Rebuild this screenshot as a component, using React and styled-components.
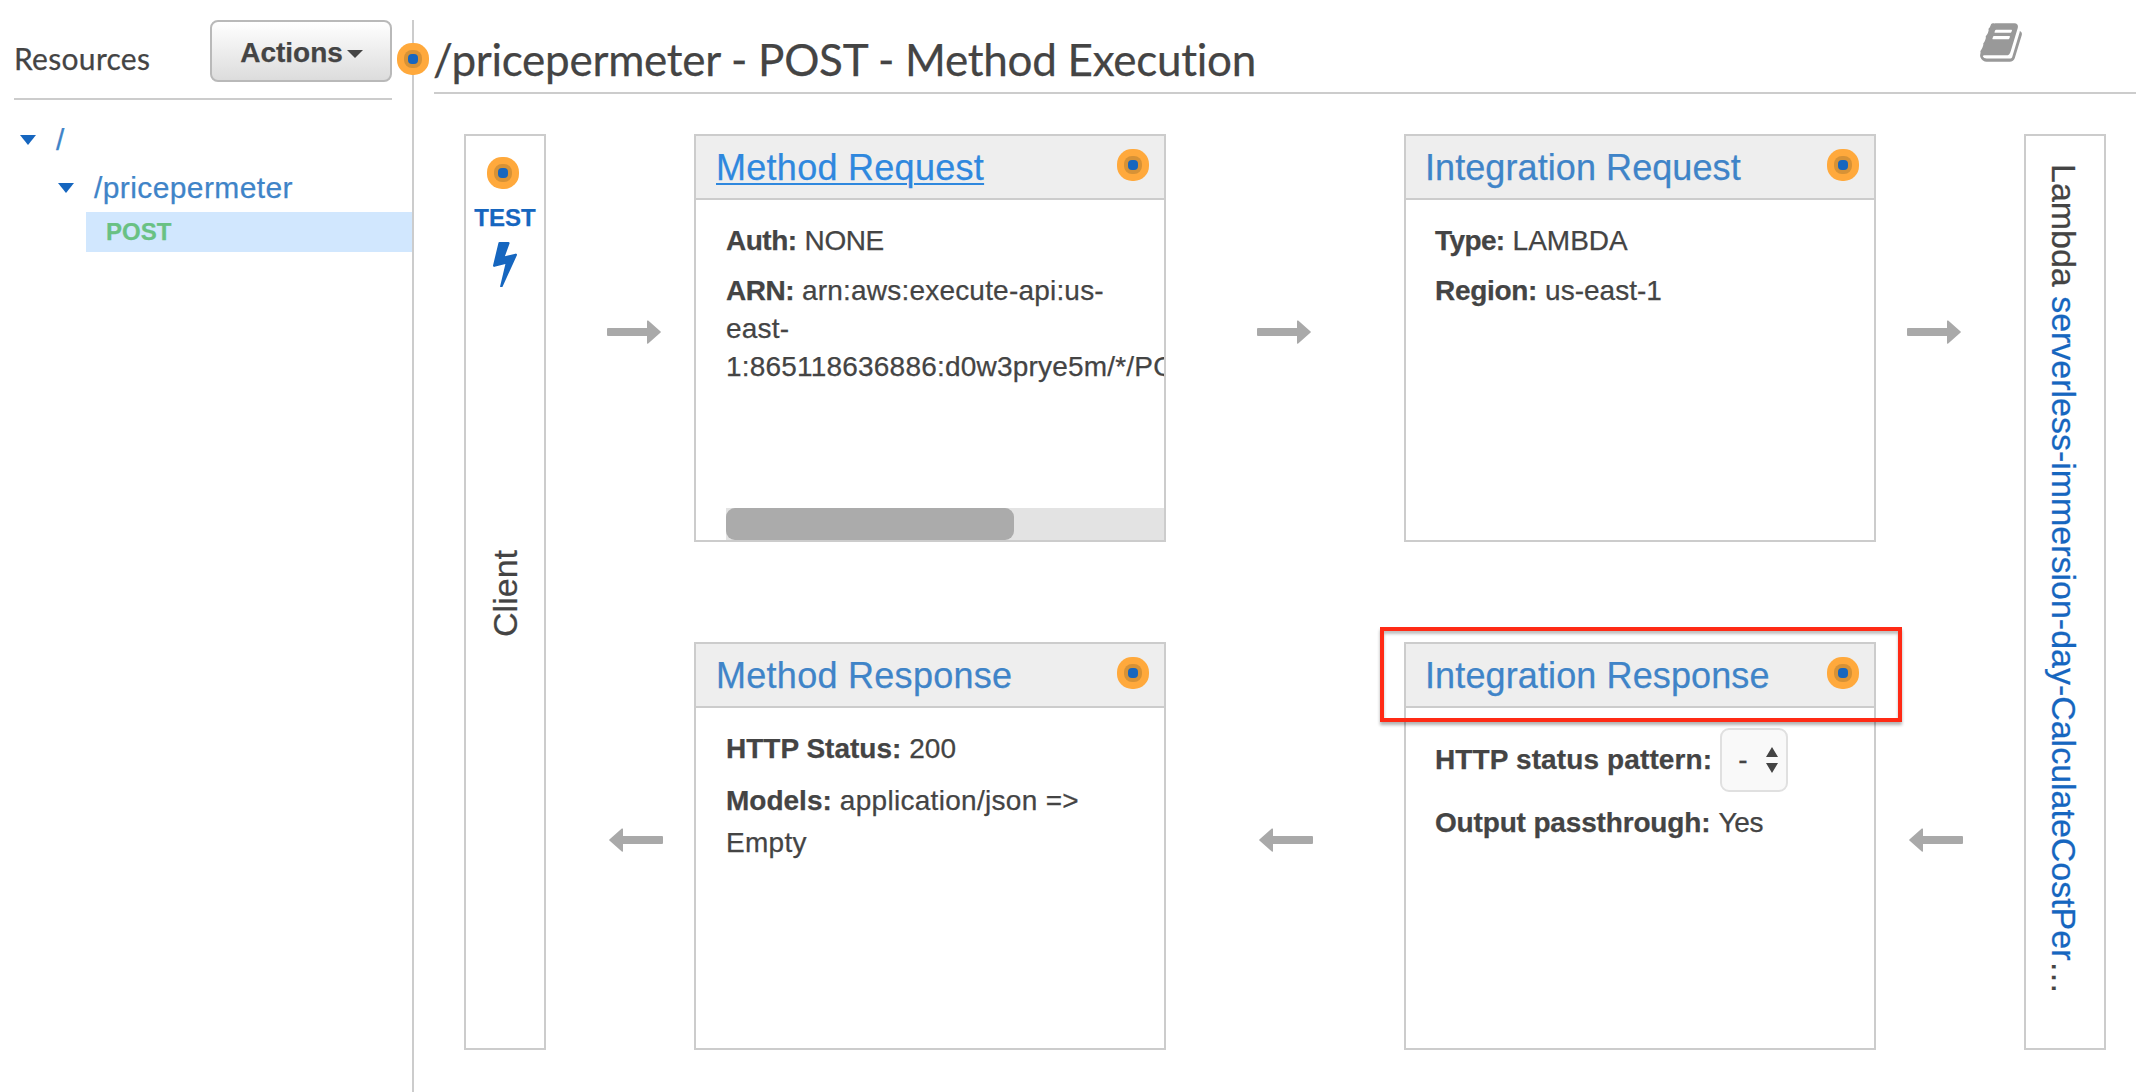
import React from "react";
import styled, { createGlobalStyle } from "styled-components";

const GlobalStyle = createGlobalStyle`
  * { box-sizing: border-box; }
  body {
    margin: 0;
    background: #fff;
    color: #444;
    font-family: "Liberation Sans", Arial, sans-serif;
    font-size: 28px;
    -webkit-text-stroke: 0.25px currentColor;
    overflow: hidden;
  }
`;

const Page = styled.div`
  display: flex;
  height: 1092px;
  padding-top: 20px;
`;

const Sidebar = styled.aside`
  width: 414px;
  flex: none;
  border-right: 2px solid #ccc;
`;

const SidebarHeader = styled.div`
  display: flex;
  justify-content: space-between;
  height: 80px;
  margin: 0 20px 0 14px;
  border-bottom: 2px solid #ccc;
`;

const SidebarTitle = styled.h2`
  margin: 19px 0 0;
  font: 400 30px/38px Lato, sans-serif;
  letter-spacing: 0.3px;
`;

const ActionsButton = styled.button`
  display: flex;
  align-items: center;
  justify-content: center;
  gap: 4px;
  width: 182px;
  height: 62px;
  padding: 3px 0 0 1px;
  border: 2px solid #b9b9b9;
  border-radius: 8px;
  background: linear-gradient(#fff, #dcdcdc);
  color: #444;
  font: bold 28px "Liberation Sans", Arial, sans-serif;
  letter-spacing: 0;
`;

const Caret = styled.span`
  flex: none;
  margin-top: ${(p) => p.$drop || 0}px;
  border: solid transparent;
  border-width: ${(p) => p.$h}px ${(p) => p.$w / 2}px 0;
  border-top-color: ${(p) => p.$color};
`;

const Tree = styled.nav`
  padding-top: 16px;
`;

const TreeRow = styled.div`
  display: flex;
  align-items: center;
  height: 48px;
  padding-left: ${(p) => p.$indent}px;
  gap: 20px;
  color: #3f84c8;
  font-size: 30px;
  letter-spacing: 0.4px;
`;

const MethodRow = styled.div`
  height: 40px;
  margin-left: 86px;
  padding-left: 20px;
  background: #d1e7fe;
  color: #69c183;
  font: bold 24px/40px "Liberation Sans", Arial, sans-serif;
`;

const Main = styled.main`
  position: relative;
  flex: 1;
  padding-left: 20px;
`;

const DividerMarker = styled.div`
  position: absolute;
  left: -17px;
  top: 23px;
`;

const MainHeader = styled.header`
  display: flex;
  justify-content: space-between;
  height: 74px;
  margin-right: 2px;
  padding-right: 114px;
  border-bottom: 2px solid #ccc;
`;

const Title = styled.h1`
  margin: 12px 0 0 -1px;
  font: 400 44px/54px Lato, sans-serif;
  letter-spacing: -0.28px;
  white-space: nowrap;
`;

const Flow = styled.div`
  display: grid;
  grid-template-columns: 82px 148px 472px 238px 472px 148px 82px;
  grid-template-rows: 408px 408px;
  row-gap: 100px;
  margin: 40px 0 0 30px;
`;

const EndColumn = styled.div`
  grid-row: 1 / 3;
  grid-column: ${(p) => p.$col};
  display: flex;
  flex-direction: column;
  align-items: center;
  border: 2px solid #ccc;
  font-size: 34px;
  line-height: 40px;
  white-space: nowrap;
`;

const ClientMarker = styled.div`
  margin: 21px 4px 0 0;
`;

const TestLink = styled.div`
  margin: 15px 0 10px;
  color: #1666bf;
  font: bold 24px/28px "Liberation Sans", Arial, sans-serif;
`;

const ClientLabel = styled.div`
  margin-top: 263px;
  writing-mode: vertical-rl;
  transform: rotate(180deg);
`;

const LambdaLabel = styled.div`
  margin: 28px 2px 0 0;
  writing-mode: vertical-rl;
  letter-spacing: -0.02px;
`;

const LambdaName = styled.span`
  color: #1666bf;
`;

const ArrowCell = styled.div`
  grid-row: ${(p) => p.$row};
  grid-column: ${(p) => p.$col};
  padding: 186px 0 0 ${(p) => p.$start}px;
  line-height: 0;
`;

const Card = styled.section`
  grid-row: ${(p) => p.$row};
  grid-column: ${(p) => p.$col};
  position: relative;
  display: flex;
  flex-direction: column;
  min-width: 0;
  border: 2px solid #ccc;
`;

const CardHeader = styled.div`
  display: flex;
  justify-content: space-between;
  align-items: center;
  flex: none;
  height: 64px;
  padding: 0 15px 0 ${(p) => p.$inset}px;
  border-bottom: 2px solid #ccc;
  background: #eee;
`;

const CardLink = styled.a`
  padding-top: 2px;
  color: ${(p) => (p.$active ? "#2f88de" : "#3f84c8")};
  font-size: 36px;
  line-height: 62px;
  letter-spacing: ${(p) => p.$spacing}px;
  text-decoration: ${(p) => (p.$active ? "underline" : "none")};
  text-decoration-thickness: 2px;
  text-underline-offset: 3px;
`;

const HeaderMarker = styled.div`
  padding-bottom: 4px;
`;

const CardBody = styled.div`
  flex: 1;
  display: flex;
  flex-direction: column;
  min-height: 0;
  padding: ${(p) => p.$top || 22}px 0 0 ${(p) => p.$inset || 30}px;
  overflow: hidden;
`;

const Field = styled.div`
  display: flex;
  align-items: center;
  gap: 8px;
  white-space: nowrap;
  line-height: ${(p) => p.$line || 38}px;
  margin-bottom: ${(p) => p.$gap ?? 12}px;
`;

const Label = styled.b`
  letter-spacing: ${(p) => p.$spacing || 0}px;
`;

const Value = styled.span`
  letter-spacing: ${(p) => p.$spacing || 0}px;
`;

const Scrollbar = styled.div`
  flex: none;
  height: 32px;
  margin-top: auto;
  background: #e3e3e3;
`;

const Thumb = styled.div`
  width: 288px;
  height: 32px;
  border-radius: 9px;
  background: #ababab;
`;

const Select = styled.div`
  display: flex;
  align-items: center;
  justify-content: space-between;
  width: 68px;
  height: 64px;
  padding: 0 8px 0 16px;
  border: 2px solid #e0e0e0;
  border-radius: 9px;
  background: #f9f9f9;
`;

const Highlight = styled.div`
  position: absolute;
  left: -26px;
  top: -17px;
  width: 522px;
  height: 95px;
  border: 4px solid #ff2a15;
  box-shadow: 0 3px 3px rgba(0, 0, 0, 0.3), inset 0 3px 3px rgba(0, 0, 0, 0.25);
`;

const Ring = styled.span`
  display: flex;
  align-items: center;
  justify-content: center;
  width: 32px;
  height: 32px;
  border-radius: 15px;
  background: #ffa93c;
`;

const RingMiddle = styled.span`
  display: flex;
  align-items: center;
  justify-content: center;
  width: 18px;
  height: 18px;
  border-radius: 8px;
  background: #d79236;
`;

const RingCore = styled.span`
  width: 10px;
  height: 10px;
  border-radius: 4px;
  background: #1666bf;
`;

const Marker = () => (
  <Ring>
    <RingMiddle>
      <RingCore />
    </RingMiddle>
  </Ring>
);

const Arrow = ({ left }) => (
  <svg width="54" height="24" viewBox="0 0 54 24" fill="#a9a9a9">
    <path
      transform={left ? "translate(54 0) scale(-1 1)" : undefined}
      d="M1 8H40V1Q40 0 41.2 .6L53.6 11.4Q54.2 12 53.6 12.6L41.2 23.4Q40 24 40 23V16H1Q0 16 0 15V9Q0 8 1 8Z"
    />
  </svg>
);

const Bolt = () => (
  <svg width="24" height="45" viewBox="0 128 896 1640" preserveAspectRatio="none" fill="#1666bf">
    <path d="M885 566q18 20 7 44l-540 1157q-13 25-42 25-4 0-14-2-17-5-25.5-19t-4.5-30l197-808-406 101q-4 1-12 1-18 0-31-11-18-15-13-39l201-825q4-14 16-23t28-9h328q19 0 32 12.5t13 29.5q0 8-5 18l-171 463 396-98q8-2 12-2 19 0 34 15z" />
  </svg>
);

const Book = () => (
  <svg width="42" height="45" viewBox="0 0 1664 1792" fill="#999">
    <path d="M1639 478q40 57 18 129l-275 906q-19 64-76.5 107.5t-122.5 43.5h-923q-77 0-148.5-53.5t-99.5-131.5q-24-67-2-127 0-4 3-27t4-37q1-8-3-21.5t-3-19.5q2-11 8-21t16.5-23.5 16.5-23.5q23-38 45-91.5t30-91.5q3-10 .5-30t-.5-28q3-11 17-28t17-23q21-36 42-92t25-90q1-9-2.5-32t.5-28q4-13 22-30.5t22-22.5q19-26 42.5-84.5t27.5-96.5q1-8-3-25.5t-2-26.5q2-8 9-18t18-23 17-21q8-12 16.5-30.5t15-35 16-36 19.5-32 26.5-23.5 36-11.5 47.5 5.5l-1 3q38-9 51-9h761q74 0 114 56t18 130l-274 906q-36 119-71.5 153.5t-128.5 34.5h-869q-27 0-38 15-11 16-1 43 24 70 144 70h923q29 0 56-15.5t35-41.5l300-987q7-22 5-57 38 15 59 43zm-1064 2q-4 13 2 22.5t20 9.5h608q13 0 25.5-9.5t16.5-22.5l21-64q4-13-2-22.5t-20-9.5h-608q-13 0-25.5 9.5t-16.5 22.5zm-83 256q-4 13 2 22.5t20 9.5h608q13 0 25.5-9.5t16.5-22.5l21-64q4-13-2-22.5t-20-9.5h-608q-13 0-25.5 9.5t-16.5 22.5z" />
  </svg>
);

const Stepper = () => (
  <svg width="12" height="26" viewBox="0 0 12 26" fill="#444">
    <path d="M6 0L12 10H0ZM0 16H12L6 26Z" />
  </svg>
);

const Header = ({ title, active, inset = 20, spacing = 0.28 }) => (
  <CardHeader $inset={inset}>
    <CardLink $active={active} $spacing={spacing}>
      {title}
    </CardLink>
    <HeaderMarker>
      <Marker />
    </HeaderMarker>
  </CardHeader>
);

const ARROWS = [
  { row: 1, col: 2, start: 61 },
  { row: 1, col: 4, start: 91 },
  { row: 1, col: 6, start: 31 },
  { row: 2, col: 2, start: 63, left: true },
  { row: 2, col: 4, start: 93, left: true },
  { row: 2, col: 6, start: 33, left: true },
];

export default function App() {
  return (
    <Page>
      <GlobalStyle />
      <Sidebar>
        <SidebarHeader>
          <SidebarTitle>Resources</SidebarTitle>
          <ActionsButton>
            Actions
            <Caret $w={16} $h={8} $drop={3} $color="#444" />
          </ActionsButton>
        </SidebarHeader>
        <Tree>
          <TreeRow $indent={20}>
            <Caret $w={17} $h={10} $color="#1666bf" />/
          </TreeRow>
          <TreeRow $indent={58}>
            <Caret $w={17} $h={10} $color="#1666bf" />
            /pricepermeter
          </TreeRow>
          <MethodRow>POST</MethodRow>
        </Tree>
      </Sidebar>
      <Main>
        <DividerMarker>
          <Marker />
        </DividerMarker>
        <MainHeader>
          <Title>/pricepermeter - POST - Method Execution</Title>
          <Book />
        </MainHeader>
        <Flow>
          <EndColumn $col={1}>
            <ClientMarker>
              <Marker />
            </ClientMarker>
            <TestLink>TEST</TestLink>
            <Bolt />
            <ClientLabel>Client</ClientLabel>
          </EndColumn>

          <Card $row={1} $col={3}>
            <Header title="Method Request" active />
            <CardBody>
              <Field>
                <Label $spacing={-0.5}>Auth:</Label>
                <Value $spacing={-0.4}>NONE</Value>
              </Field>
              <Field $gap={0}>
                <Label $spacing={-0.5}>ARN:</Label>
                <Value $spacing={0.2}>arn:aws:execute-api:us-</Value>
              </Field>
              <Field $gap={0}>
                <Value $spacing={0.2}>east-</Value>
              </Field>
              <Field $gap={0}>
                <Value $spacing={0.2}>1:865118636886:d0w3prye5m/*/POST/pricepermeter</Value>
              </Field>
              <Scrollbar>
                <Thumb />
              </Scrollbar>
            </CardBody>
          </Card>

          <Card $row={1} $col={5}>
            <Header title="Integration Request" inset={19} spacing={0.08} />
            <CardBody $inset={29}>
              <Field>
                <Label $spacing={-0.6}>Type:</Label>
                <Value>LAMBDA</Value>
              </Field>
              <Field>
                <Label $spacing={-0.3}>Region:</Label>
                <Value>us-east-1</Value>
              </Field>
            </CardBody>
          </Card>

          <Card $row={2} $col={3}>
            <Header title="Method Response" />
            <CardBody>
              <Field>
                <Label>HTTP Status:</Label>
                <Value>200</Value>
              </Field>
              <Field $line={42} $gap={0}>
                <Label>Models:</Label>
                <Value $spacing={0.3}>{"application/json =>"}</Value>
              </Field>
              <Field $line={42} $gap={0}>
                <Value $spacing={0.3}>Empty</Value>
              </Field>
            </CardBody>
          </Card>

          <Card $row={2} $col={5}>
            <Header title="Integration Response" inset={19} spacing={0.12} />
            <CardBody $top={20} $inset={29}>
              <Field $gap={12}>
                <Label $spacing={0.12}>HTTP status pattern:</Label>
                <Select>
                  - <Stepper />
                </Select>
              </Field>
              <Field>
                <Label $spacing={-0.16}>Output passthrough:</Label>
                <Value $spacing={-0.3}>Yes</Value>
              </Field>
            </CardBody>
            <Highlight />
          </Card>

          <EndColumn $col={7}>
            <LambdaLabel>
              Lambda <LambdaName>serverless-immersion-day-CalculateCostPer</LambdaName>…
            </LambdaLabel>
          </EndColumn>

          {ARROWS.map((a) => (
            <ArrowCell key={`${a.row}-${a.col}`} $row={a.row} $col={a.col} $start={a.start}>
              <Arrow left={a.left} />
            </ArrowCell>
          ))}
        </Flow>
      </Main>
    </Page>
  );
}
